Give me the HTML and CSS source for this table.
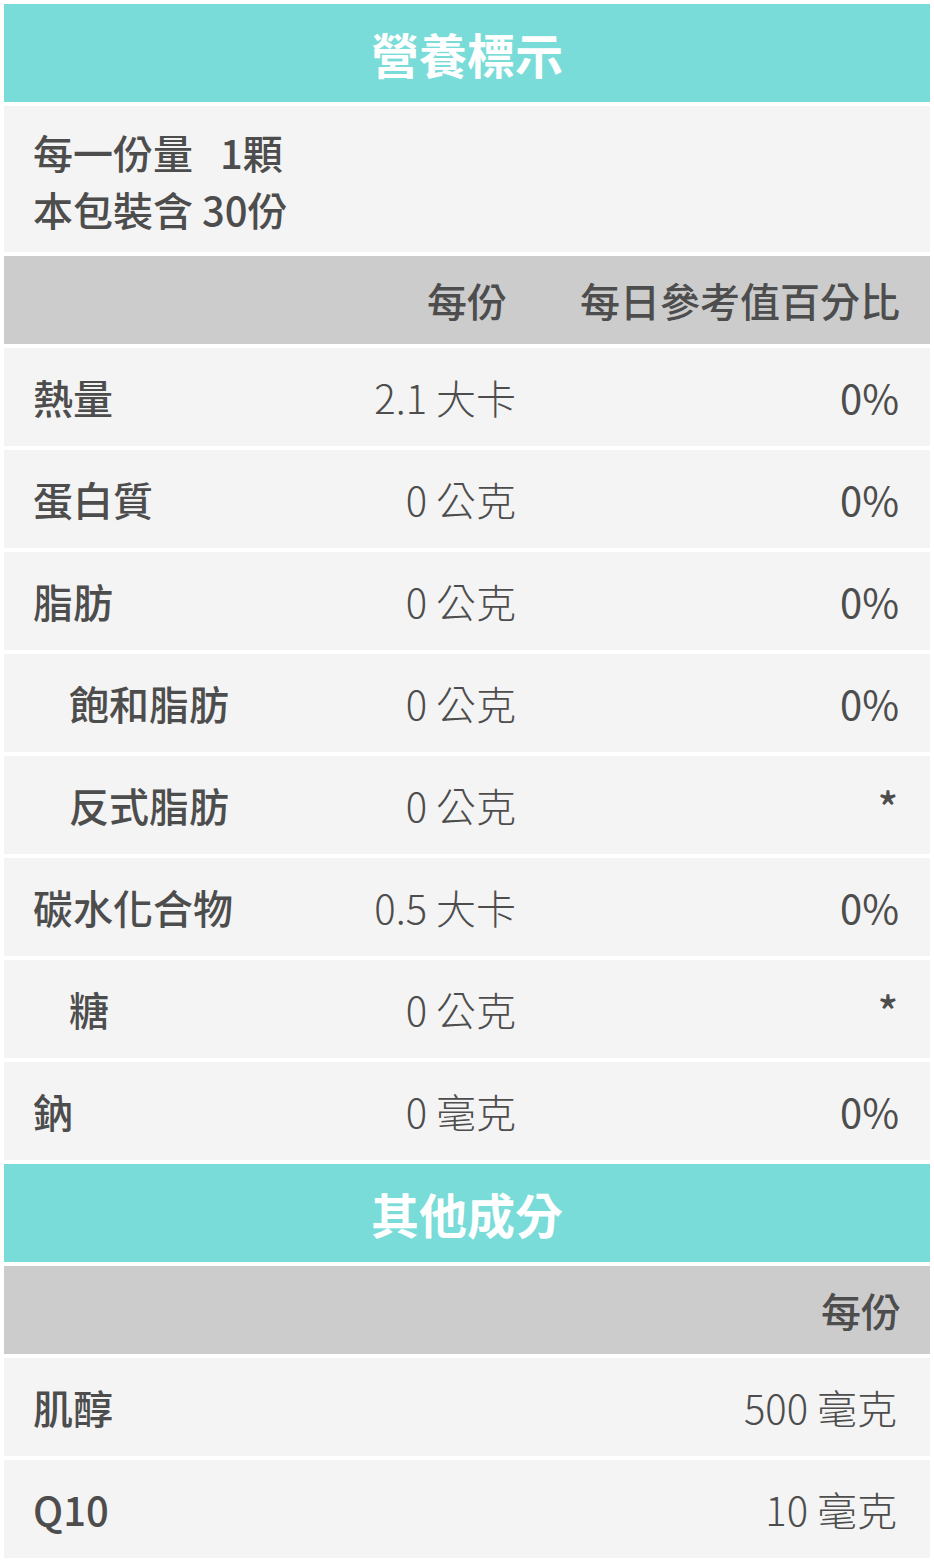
FILE: index.html
```html
<!DOCTYPE html>
<html lang="zh-Hant">
<head>
<meta charset="utf-8">
<title>營養標示</title>
<link rel="stylesheet" href="styles.css">
</head>
<body>
<div class="label">
  <div class="title">營養標示</div>
  <div class="info">
    <div>每一份量&nbsp;&nbsp;&nbsp;1顆</div>
    <div>本包裝含 30份</div>
  </div>
  <div class="row head">
    <span></span>
    <span class="val head-val">每份</span>
    <span class="pct">每日參考值百分比</span>
  </div>
  <div class="row"><span class="name">熱量</span><span class="val">2.1 大卡</span><span class="pct">0%</span></div>
  <div class="row"><span class="name">蛋白質</span><span class="val">0 公克</span><span class="pct">0%</span></div>
  <div class="row"><span class="name">脂肪</span><span class="val">0 公克</span><span class="pct">0%</span></div>
  <div class="row"><span class="name sub">飽和脂肪</span><span class="val">0 公克</span><span class="pct">0%</span></div>
  <div class="row"><span class="name sub">反式脂肪</span><span class="val">0 公克</span><span class="pct star">*</span></div>
  <div class="row"><span class="name">碳水化合物</span><span class="val">0.5 大卡</span><span class="pct">0%</span></div>
  <div class="row"><span class="name sub">糖</span><span class="val">0 公克</span><span class="pct star">*</span></div>
  <div class="row"><span class="name">鈉</span><span class="val">0 毫克</span><span class="pct">0%</span></div>
  <div class="title">其他成分</div>
  <div class="row two head">
    <span></span>
    <span class="pct">每份</span>
  </div>
  <div class="row two"><span class="name">肌醇</span><span class="val">500 毫克</span></div>
  <div class="row two"><span class="name">Q10</span><span class="val">10 毫克</span></div>
</div>
</body>
</html>
```

FILE: styles.css
```css
html, body {
  margin: 0;
  padding: 0;
  background: #ffffff;
}

body {
  font-family: "Noto Sans CJK TC", "Noto Sans", sans-serif;
  color: #4d4d4d;
}

.label {
  display: flex;
  flex-direction: column;
  gap: 4px;
  padding: 4px;
}

.title {
  height: 98px;
  background: #79dcd8;
  color: #ffffff;
  font-size: 48px;
  font-weight: 700;
  display: flex;
  align-items: center;
  justify-content: center;
}

.info {
  height: 146px;
  background: #f4f4f4;
  box-sizing: border-box;
  padding: 4px 0 0 29px;
  font-size: 40px;
  font-weight: 500;
  line-height: 57px;
  display: flex;
  flex-direction: column;
  justify-content: center;
}

.row {
  height: 98px;
  background: #f4f4f4;
  display: grid;
  grid-template-columns: 1fr 240px 383px;
  align-items: center;
  padding: 0 31px 0 29px;
  font-size: 40px;
}

.row.two {
  grid-template-columns: 1fr 400px;
  padding-right: 33px;
}

.row.head {
  height: 88px;
  background: #cccccc;
  font-weight: 500;
}

.row.two.head {
  padding-right: 30px;
}

.head .pct {
  margin-right: -1px;
}

.name {
  font-weight: 500;
  white-space: nowrap;
}

.name.sub {
  padding-left: 36px;
}

.val {
  font-weight: 300;
  text-align: right;
  white-space: nowrap;
}

.head .val,
.head .pct {
  font-weight: 500;
}

.head-val {
  padding-right: 9px;
}

.pct {
  text-align: right;
  font-weight: 400;
  white-space: nowrap;
}

.pct.star {
  padding-right: 1px;
  font-weight: 500;
  font-size: 42px;
}
```
